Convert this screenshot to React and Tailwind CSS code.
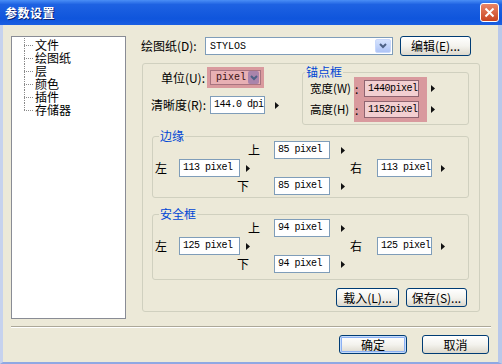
import React from "react";

const cjk = "font-['Noto_Sans_CJK_SC','Noto_Sans',sans-serif]";
const mono = "font-['Liberation_Mono','Noto_Sans_CJK_SC',monospace]";

const Arrow = ({ className = "" }) => (
  <svg width="4" height="7" viewBox="0 0 4 7" className={`shrink-0 ${className}`}>
    <path d="M0 0 L4 3.5 L0 7 Z" fill="#111" />
  </svg>
);

const Field = ({ value, className = "" }) => (
  <div
    className={`h-[18px] shrink-0 bg-white border border-[#7F9DB9] flex items-center pl-[3px] overflow-hidden whitespace-nowrap ${mono} text-[10px] tracking-[-0.5px] text-black ${className}`}
  >
    {value}
  </div>
);

const XpButton = ({ children, className = "", focused = false }) => (
  <div
    className={`flex items-center justify-center whitespace-nowrap rounded-[3px] border border-[#003C74] bg-gradient-to-b from-white via-[#f4f3ee] to-[#dcd8cc] text-[12px] text-black ${cjk} ${
      focused ? "shadow-[inset_0_0_0_1px_#c6dcfb,inset_0_0_0_2px_#8cb0f3]" : ""
    } ${className}`}
  >
    {children}
  </div>
);

const ComboArrow = ({ className = "" }) => (
  <div className={`flex items-center justify-center rounded-[2px] shrink-0 ${className}`}>
    <svg width="8" height="6" viewBox="0 0 8 6">
      <path d="M1 1 L4 4 L7 1" stroke="#4D6185" strokeWidth="2" fill="none" />
    </svg>
  </div>
);

const MarginBox = ({ title, v, className = "" }) => (
  <fieldset className={`border border-[#D0D0BF] rounded-[3px] w-[317px] ${className}`}>
    <legend className={`ml-[6px] px-[1px] text-[12px] leading-[10px] text-[#0046D5] ${cjk}`}>
      {title}
    </legend>
    <div className={`flex flex-col text-[12px] leading-[14px] text-black ${cjk}`}>
      <div className="flex items-center h-[18px]">
        <span className="ml-[95px] w-[12px] text-center">上</span>
        <Field value={v.top} className="ml-[14px] w-[56px]" />
        <Arrow className="ml-[11px]" />
      </div>
      <div className="flex items-center h-[18px]">
        <span className="ml-[2px] w-[12px] text-center">左</span>
        <Field value={v.left} className="ml-[12px] w-[61px]" />
        <Arrow className="ml-[6px]" />
        <span className="ml-[100px] w-[12px] text-center">右</span>
        <Field value={v.right} className="ml-[15px] w-[55px]" />
        <Arrow className="ml-[9px]" />
      </div>
      <div className="flex items-center h-[18px]">
        <span className="ml-[84px] w-[12px] text-center">下</span>
        <Field value={v.bottom} className="ml-[25px] w-[56px]" />
        <Arrow className="ml-[11px]" />
      </div>
    </div>
  </fieldset>
);

const treeItems = ["文件", "绘图纸", "层", "颜色", "插件", "存储器"];

export default function App() {
  return (
    <div className={`w-[502px] h-[364px] flex flex-col overflow-hidden ${cjk}`}>
      {/* title bar */}
      <div className="h-[25px] flex items-center justify-between bg-[linear-gradient(#4a8ef6_0%,#1e62e2_18%,#0f55dc_75%,#1b5fe2_100%)] pl-[5px] pr-[3px]">
        <span className="text-white font-bold text-[12px] tracking-[0.5px] [text-shadow:1px_1px_0_#0a2070]">
          参数设置
        </span>
        <div className="w-[19px] h-[19px] rounded-[3px] border border-white bg-gradient-to-b from-[#e98566] to-[#c8431f] flex items-center justify-center">
          <svg width="11" height="11" viewBox="0 0 11 11">
            <path d="M1.5 1.5 L9.5 9.5 M9.5 1.5 L1.5 9.5" stroke="white" strokeWidth="2" />
          </svg>
        </div>
      </div>

      {/* body */}
      <div className="flex-1 flex flex-col bg-[#ECE9D8] border-l-[3px] border-r-[4px] border-b-[2px] border-l-[#c6d2ee] border-r-[#b9c8ea] border-b-[#8fa8e3] pl-[8px] pr-[7px] pt-[11px]">
        <div className="flex items-start">
          {/* tree */}
          <div className="w-[115px] h-[283px] bg-white border border-[#898c95] pt-[1px] pl-[12px] text-[12px] leading-[13px] text-black">
            {treeItems.map((t, i) => (
              <div key={t} className="flex items-center h-[13px]">
                <div className="relative w-[11px] h-full">
                  <div
                    className={`absolute left-0 top-0 border-l border-dotted border-[#8a8a8a] ${
                      i === treeItems.length - 1 ? "h-1/2" : "h-full"
                    }`}
                  />
                  <div className="absolute left-0 w-[9px] top-1/2 border-t border-dotted border-[#8a8a8a]" />
                </div>
                <span className="h-[13px] leading-[13px] overflow-visible">{t}</span>
              </div>
            ))}
          </div>

          {/* right side */}
          <div className="ml-[15px] flex flex-col">
            <div className="flex items-center h-[20px]">
              <span className="w-[64px] text-[12px] text-black whitespace-nowrap">绘图纸(D):</span>
              <div className="w-[188px] h-[18px] bg-white border border-[#7F9DB9] flex items-center justify-between pl-[4px] pr-[1px]">
                <span className={`${mono} text-[10px] text-black`}>STYLOS</span>
                <ComboArrow className="w-[16px] h-[14px] bg-gradient-to-b from-[#d6e3fd] to-[#aec4f6] border border-[#c8d8fb]" />
              </div>
              <XpButton className="ml-[7px] w-[71px] h-[20px]">编辑(E)...</XpButton>
            </div>

            {/* main group */}
            <fieldset className="mt-[7px] ml-[1px] w-[338px] border border-[#D0D0BF] rounded-[3px] flex flex-col">
              <div className="flex items-start">
                <div className="w-[159px] flex flex-col text-[12px] leading-[14px] text-black whitespace-nowrap">
                  <div className="mt-[3px] flex items-center h-[21px]">
                    <span className="w-[62px] text-right">单位(U):</span>
                    <div className="ml-[2px] w-[57px] h-[21px] bg-[#d99a9e] p-[3px]">
                      <div className="h-full flex items-center justify-between border border-[#a87480] bg-[#e8b0b4] pl-[5px] pr-[1px]">
                        <span className={`${mono} text-[10px] text-[#3a1010]`}>pixel</span>
                        <ComboArrow className="w-[11px] h-[13px] bg-[#a984ab]" />
                      </div>
                    </div>
                  </div>
                  <div className="mt-[8px] flex items-center h-[18px]">
                    <span className="w-[63px] text-right">清晰度(R):</span>
                    <Field value="144.0 dpi" className="ml-[4px] w-[55px]" />
                    <Arrow className="ml-[10px]" />
                  </div>
                </div>

                {/* anchor */}
                <fieldset className="mt-[3px] w-[167px] border border-[#D0D0BF] rounded-[3px]">
                  <legend className="ml-[2px] px-[1px] text-[12px] leading-[10px] text-[#0046D5]">
                    锚点框
                  </legend>
                  <div className="flex items-start pb-[2px] text-[12px] text-black whitespace-nowrap">
                    <div className="ml-[7px] w-[44px] flex flex-col pt-[3px] gap-[4px] text-[11.5px]">
                      <span className="h-[17px] leading-[17px]">宽度(W)</span>
                      <span className="h-[17px] leading-[17px]">高度(H)</span>
                    </div>
                    <div className="w-[73px] bg-[#d99a9e] pt-[3px] pb-[4px] flex flex-col gap-[4px]">
                      {["1440pixel", "1152pixel"].map((val) => (
                        <div key={val} className="flex items-center h-[17px]">
                          <span className="w-[10px] pl-[1px] leading-[17px]">:</span>
                          <div
                            className={`w-[55px] h-[17px] border border-[#8f6470] bg-[#f3cfd1] flex items-center pl-[3px] overflow-hidden ${mono} text-[10px] tracking-[-0.5px] text-black`}
                          >
                            {val}
                          </div>
                        </div>
                      ))}
                    </div>
                    <div className="ml-[4px] flex flex-col pt-[3px] gap-[4px]">
                      <div className="h-[17px] flex items-center">
                        <Arrow />
                      </div>
                      <div className="h-[17px] flex items-center">
                        <Arrow />
                      </div>
                    </div>
                  </div>
                </fieldset>
              </div>

              <MarginBox
                title="边缘"
                className="ml-[9px] mt-[6px] pb-[2px]"
                v={{ top: "85 pixel", left: "113 pixel", right: "113 pixel", bottom: "85 pixel" }}
              />
              <MarginBox
                title="安全框"
                className="ml-[9px] mt-[11px] pb-[6px]"
                v={{ top: "94 pixel", left: "125 pixel", right: "125 pixel", bottom: "94 pixel" }}
              />

              <div className="mt-[8px] mb-[4px] pr-[12px] flex justify-end gap-[7px]">
                <XpButton className="w-[63px] h-[19px]">载入(L)...</XpButton>
                <XpButton className="w-[61px] h-[19px]">保存(S)...</XpButton>
              </div>
            </fieldset>
          </div>
        </div>

        {/* separator */}
        <div className="mt-[7px] border-t border-t-[#ACA899] border-b border-b-white" />

        <div className="mt-[7px] mr-[2px] flex justify-end gap-[15px]">
          <XpButton focused className="w-[68px] h-[19px]">确定</XpButton>
          <XpButton className="w-[67px] h-[19px]">取消</XpButton>
        </div>
      </div>
    </div>
  );
}
